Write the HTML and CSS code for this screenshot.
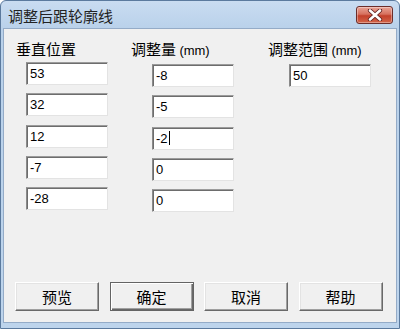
FILE: index.html
```html
<!DOCTYPE html>
<html lang="zh-CN">
<head>
<meta charset="utf-8">
<title>调整后跟轮廓线</title>
<link rel="stylesheet" href="styles.css">
</head>
<body>
<div class="window">
  <div class="titlebar">
    <span class="title">调整后跟轮廓线</span>
    <button class="close" aria-label="关闭">
      <svg width="16" height="12" viewBox="0 0 16 12">
        <path d="M3 1.5 L13 10.5 M13 1.5 L3 10.5" stroke="#5a1e1e" stroke-width="4.2" stroke-linecap="round" fill="none"/>
        <path d="M3 1.5 L13 10.5 M13 1.5 L3 10.5" stroke="#ffffff" stroke-width="2.6" stroke-linecap="round" fill="none"/>
      </svg>
    </button>
  </div>
  <div class="client">
    <div class="fields">
      <div class="col col1">
        <div class="label">垂直位置</div>
        <div class="inputs">
          <div class="edit">53</div>
          <div class="edit">32</div>
          <div class="edit">12</div>
          <div class="edit">-7</div>
          <div class="edit">-28</div>
        </div>
      </div>
      <div class="col col2">
        <div class="label">调整量 <span class="unit">(mm)</span></div>
        <div class="inputs">
          <div class="edit">-8</div>
          <div class="edit">-5</div>
          <div class="edit">-2<span class="caret"></span></div>
          <div class="edit">0</div>
          <div class="edit">0</div>
        </div>
      </div>
      <div class="col col3">
        <div class="label">调整范围 <span class="unit">(mm)</span></div>
        <div class="inputs">
          <div class="edit">50</div>
        </div>
      </div>
    </div>
    <div class="buttons">
      <button class="btn">预览</button>
      <button class="btn default">确定</button>
      <button class="btn">取消</button>
      <button class="btn">帮助</button>
    </div>
  </div>
</div>
</body>
</html>
```

FILE: styles.css
```css
html, body {
  margin: 0;
  padding: 0;
}
body {
  width: 400px;
  height: 329px;
  overflow: hidden;
  font-family: "Noto Sans CJK SC", "Liberation Sans", sans-serif;
  color: #000;
}
.window {
  box-sizing: border-box;
  width: 400px;
  height: 329px;
  display: flex;
  flex-direction: column;
  background: linear-gradient(#c9dcf1 0px, #b9d1ea 28px, #bdd4ec 100%);
  border: 1px solid #5b7a9e;
  border-radius: 6px 6px 0 0;
  padding: 0 2px 5px 2px;
}
.titlebar {
  height: 27px;
  display: flex;
  align-items: flex-start;
  justify-content: space-between;
  flex-shrink: 0;
}
.title {
  font-size: 15px;
  line-height: 18px;
  margin-top: 6px;
  margin-left: 5px;
  color: #222;
}
.close {
  margin-top: 5px;
  margin-right: 4px;
  width: 37px;
  height: 18px;
  padding: 0;
  border: 1px solid #6b2d2a;
  border-radius: 3px;
  background: linear-gradient(#e8a496 0%, #d6705e 45%, #c3402b 55%, #d2654a 100%);
  display: flex;
  align-items: center;
  justify-content: center;
  box-shadow: inset 0 0 0 1px rgba(255,255,255,0.35);
}
.client {
  flex: 1;
  background: #f0f0f0;
  border: 1px solid #94abc7;
  display: flex;
  flex-direction: column;
  padding: 11px 0 11px 0;
}
.fields {
  display: flex;
  padding-left: 12px;
}
.col1 { width: 115px; }
.col2 { width: 137px; }
.col3 { flex: 1; }
.label {
  font-size: 15px;
  line-height: 18px;
  white-space: nowrap;
}
.unit {
  font-family: "Liberation Sans", sans-serif;
  font-size: 13px;
}
.inputs {
  margin-top: 4px;
  display: flex;
  flex-direction: column;
  gap: 8.25px;
}
.col1 .inputs { margin-left: 10px; }
.col2 .inputs { margin-left: 21px; }
.col3 .inputs { margin-left: 21px; }
.edit {
  box-sizing: border-box;
  width: 82px;
  height: 23px;
  background: #fff;
  border-style: solid;
  border-width: 1px;
  border-color: #9b9b9b #e3e3e3 #e3e3e3 #8a8a8a;
  box-shadow: inset 1px 1px 0 #6d6d6d;
  font-family: "Liberation Sans", sans-serif;
  font-size: 13px;
  line-height: 21px;
  padding-left: 3px;
  display: flex;
  align-items: center;
}
.caret {
  display: inline-block;
  width: 1px;
  height: 14px;
  background: #000;
  margin-left: 1px;
}
.buttons {
  margin-top: auto;
  display: flex;
  gap: 10.5px;
  padding-left: 11px;
}
.btn {
  box-sizing: border-box;
  width: 84px;
  height: 29px;
  padding: 0;
  background: #f0f0f0;
  font-family: "Noto Sans CJK SC", sans-serif;
  font-size: 15px;
  color: #000;
  border-style: solid;
  border-width: 1px;
  border-color: #ffffff #696969 #696969 #ffffff;
  box-shadow: inset -1px -1px 0 #a0a0a0, inset 1px 1px 0 #e3e3e3;
}
.btn.default {
  border-color: #646464;
  box-shadow: inset 1px 1px 0 #ffffff, inset -1px -1px 0 #696969, inset -2px -2px 0 #a0a0a0;
}
```
